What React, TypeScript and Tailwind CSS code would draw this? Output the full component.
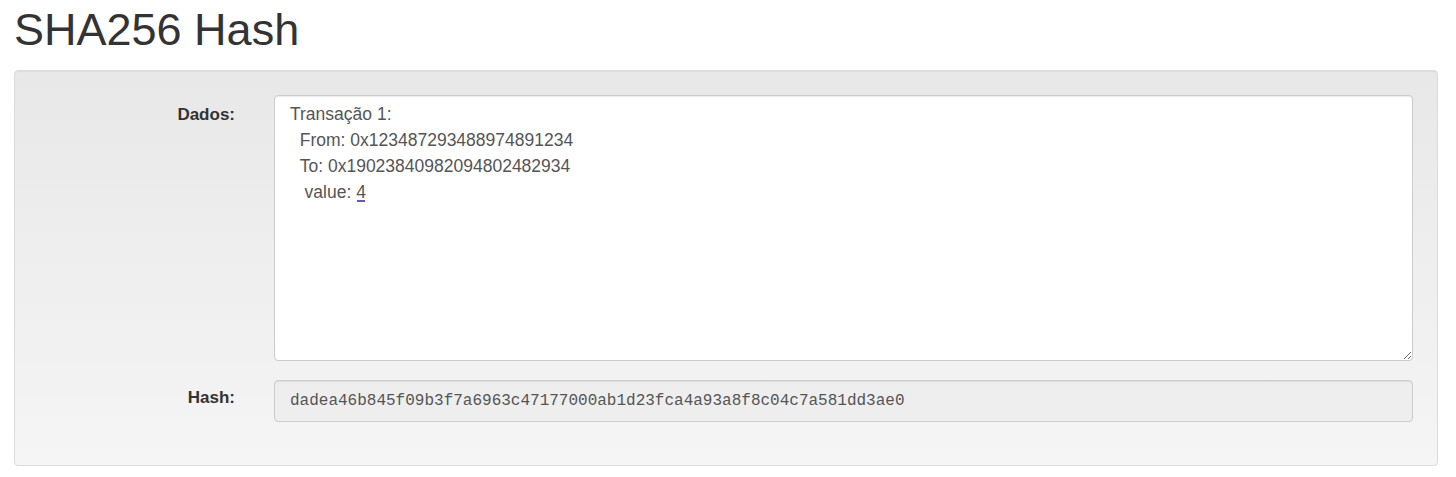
import React from 'react';

const dados = [
    'Transação 1:',
    '  From: 0x12348729348897489' + '1234',
    '  To: 0x19023840982094802482934',
    '   value: 4',
].join('\n');

const hash = 'dadea46b845f09b3f7a6963c47177000ab1d23fca4a93a8f8c04c7a581dd3ae0';

const App = () => {
    return (
        <div className="min-h-screen bg-white px-[14px] text-[#333]" style={{fontFamily: '"Liberation Sans", Arial, sans-serif'}}>
            <h1 className="mt-[5px] mb-[15px] text-[45px] leading-[1.1] font-normal">SHA256 Hash</h1>

            {/* Well */}
            <div className="w-[1424px] rounded-[4px] border border-[#dcdcdc] bg-gradient-to-b from-[#e8e8e8] to-[#f5f5f5] p-[24px] shadow-[inset_0_1px_1px_rgba(0,0,0,0.05)]">
                <div className="flex gap-[39px]">
                    <label className="w-[196px] shrink-0 pt-[8px] text-right text-[17px] leading-[24px] font-bold">Dados:</label>
                    <div className="relative flex-1">
                        <textarea
                            defaultValue={dados}
                            spellCheck={false}
                            className="block h-[266px] w-full resize-y rounded-[4px] border border-[#ccc] bg-white px-[15px] py-[5px] text-[17.5px] leading-[26px] text-[#555] shadow-[inset_0_1px_1px_rgba(0,0,0,0.075)] outline-none"
                            style={{fontFamily: '"Liberation Sans", Arial, sans-serif'}}
                        />
                        {/* spellcheck mark under the 4 */}
                        <span className="pointer-events-none absolute left-[83px] top-[105px] h-[2px] w-[8px] bg-[#6354d4]" />
                    </div>
                </div>

                <div className="mt-[19px] mb-[19px] flex gap-[39px]">
                    <label className="w-[196px] shrink-0 pt-[6px] text-right text-[17px] leading-[24px] font-bold">Hash:</label>
                    <div className="flex h-[42px] flex-1 items-center rounded-[4px] border border-[#ccc] bg-[#eee] px-[15px] text-[16px] text-[#555] shadow-[inset_0_1px_1px_rgba(0,0,0,0.075)]"
                         style={{fontFamily: '"Liberation Mono", "DejaVu Sans Mono", monospace'}}>
                        {hash}
                    </div>
                </div>
            </div>
        </div>
    );
};

export default App;
